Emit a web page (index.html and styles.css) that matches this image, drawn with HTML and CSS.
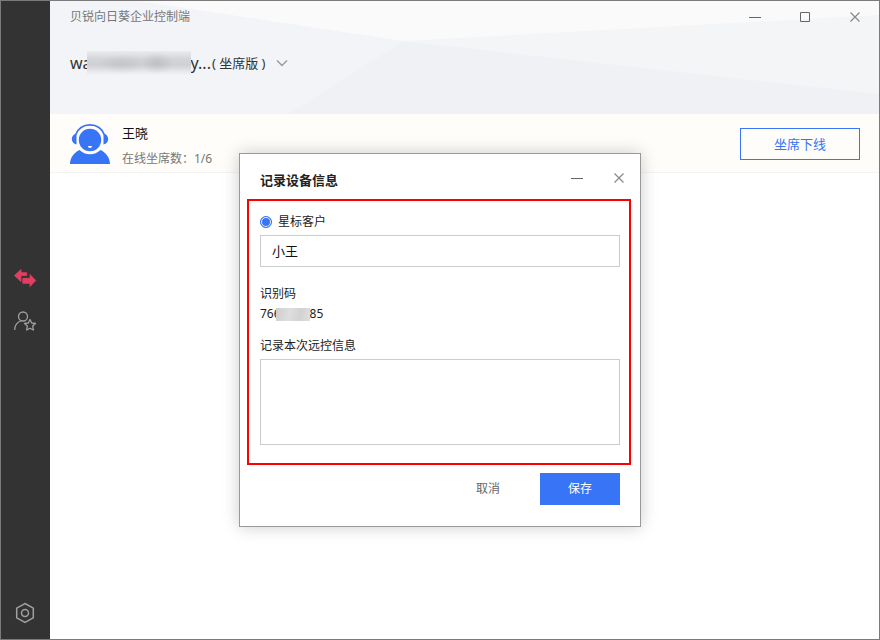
FILE: index.html
```html
<!DOCTYPE html>
<html lang="zh-CN">
<head>
<meta charset="utf-8">
<meta name="viewport" content="width=device-width, initial-scale=1">
<title>贝锐向日葵企业控制端</title>
<link rel="stylesheet" href="styles.css">
</head>
<body>
<div class="window">
  <nav class="sidebar">
    <div class="side-group">
      <a class="side-link" href="#remote" aria-label="远控">
        <svg width="24" height="20" viewBox="0 0 24 20"><path fill="#e33e60" stroke="#e33e60" stroke-width=".8" stroke-linejoin="round" d="M1.500 7.500 8 1.500v3.200h5.700v2.800H8v6zM9.800 10.300H17V6.500l5.700 6-5.700 6v-3.200H9.800z"/></svg>
      </a>
      <a class="side-link" href="#customers" aria-label="星标客户">
        <svg width="24" height="22" viewBox="0 0 24 22" fill="none" stroke="#a0a0a0" stroke-width="1.300"><circle cx="10" cy="6.500" r="4.500"/><path d="M1.700 20c0-4.500 2.500-7.700 6-9"/><path stroke-linejoin="round" d="m17 9.500 1.700 3.500 3.800.500-2.800 2.600.700 3.900-3.400-1.800-3.400 1.800.700-3.900-2.800-2.600 3.800-.500z"/></svg>
      </a>
    </div>
    <a class="side-link" href="#settings" aria-label="设置">
      <svg width="20" height="22" viewBox="0 0 20 22" fill="none" stroke="#a0a0a0" stroke-width="1.500"><path d="m10 1.500 8.300 4.700v9.600L10 20.500l-8.300-4.700V6.200z"/><circle cx="10" cy="11" r="3.500"/></svg>
    </a>
  </nav>
  <main class="content">
    <header class="header">
      <svg class="header-art" viewBox="0 0 830 113" preserveAspectRatio="none" aria-hidden="true">
        <path fill="#f0f1f5" d="M239 113 354 40 830 93v20z"/>
        <path fill="#f4f5f7" d="M354 40 830 14v79z"/>
        <path fill="#fafafa" d="M88 0 354 40 830 14V0z"/>
      </svg>
      <div class="title-bar">
        <h1 class="app-title">贝锐向日葵企业控制端</h1>
        <div class="controls">
          <button class="icon-button" type="button" aria-label="最小化"><svg width="12" height="12" viewBox="0 0 12 12"><path stroke="#666" d="M0 6.500h12"/></svg></button>
          <button class="icon-button" type="button" aria-label="最大化"><svg width="12" height="12" viewBox="0 0 12 12"><path fill="none" stroke="#666" d="M1.500 1.500h9v9h-9z"/></svg></button>
          <button class="icon-button" type="button" aria-label="关闭"><svg width="12" height="12" viewBox="0 0 12 12"><path stroke="#888" stroke-width="1.200" d="m1.500 1.500 9 9m0-9-9 9"/></svg></button>
        </div>
      </div>
      <button class="account" type="button">
        <span class="name">wa</span><span class="mask"></span><span class="name">y...</span><span class="edition">( 坐席版 )</span>
        <svg width="12" height="8" viewBox="0 0 12 8"><path fill="none" stroke="#999" stroke-width="1.400" d="m1 1.500 5 5 5-5"/></svg>
      </button>
    </header>
    <section class="agent">
      <svg class="avatar" width="40" height="40" viewBox="0 0 40 40">
        <g fill="#3874f6"><circle cx="20" cy="16" r="11.200"/><path d="M0 40c0-6 4-11.500 9.500-14a15 15 0 0 0 21 0C36 28.500 40 34 40 40z"/><path d="M6.500 9.500v11C3.500 20 1.800 17.500 1.800 15s1.700-5 4.700-5.500zM33.500 9.500v11c3-.500 4.700-3 4.700-5.500s-1.700-5-4.700-5.500z"/></g>
        <path fill="none" stroke="#3874f6" stroke-width="1.600" d="M5.500 11C8 4.500 13.500.900 20 .900S32 4.500 34.500 11"/>
        <path fill="#fff" d="M18 22h4c0 1.300-.900 2-2 2s-2-.700-2-2z"/>
      </svg>
      <div class="agent-info">
        <p class="agent-name">王晓</p>
        <p class="agent-count">在线坐席数：1/6</p>
      </div>
      <button class="offline" type="button">坐席下线</button>
    </section>
  </main>
</div>
<form class="dialog" role="dialog" aria-labelledby="dialog-title">
  <div class="dialog-head">
    <h2 id="dialog-title">记录设备信息</h2>
    <div class="controls dialog-controls">
      <button class="icon-button" type="button" aria-label="最小化"><svg width="12" height="12" viewBox="0 0 12 12"><path stroke="#666" d="M0 6.500h12"/></svg></button>
      <button class="icon-button" type="button" aria-label="关闭"><svg width="12" height="12" viewBox="0 0 12 12"><path stroke="#888" stroke-width="1.200" d="m1.500 1.500 9 9m0-9-9 9"/></svg></button>
    </div>
  </div>
  <div class="fields">
    <label class="choice"><input class="radio" type="radio" name="kind" checked>星标客户</label>
    <input class="text-box" type="text" value="小王" aria-label="客户名称">
    <div class="code">
      <p>识别码</p>
      <p class="code-value">766<span class="code-mask"></span>85</p>
    </div>
    <label class="note-label" for="note">记录本次远控信息</label>
    <textarea class="note" id="note"></textarea>
  </div>
  <div class="actions">
    <button class="cancel" type="button">取消</button>
    <button class="save" type="submit">保存</button>
  </div>
</form>
</body>
</html>
```
FILE: styles.css
```css
* {
  box-sizing: border-box;
}

body,
h1,
h2,
p {
  margin: 0;
}

body {
  display: grid;
  min-height: 100vh;
  background: #fff;
  color: #222;
  font: 12px/20px "Noto Sans", "Noto Sans CJK SC", sans-serif;
}

button,
input,
textarea {
  font: inherit;
  border-radius: 0;
}

button {
  padding: 0;
  border: 0;
  background: none;
  cursor: pointer;
}

svg {
  display: block;
  flex: none;
}

.window {
  grid-area: 1 / 1;
  display: flex;
  border: 1px solid #7b7b7b;
}

.sidebar {
  flex: none;
  width: 49px;
  display: flex;
  flex-direction: column;
  align-items: center;
  padding: 0 2px 15px 0;
  background: #333;
}

.side-group {
  flex: 1;
  display: flex;
  flex-direction: column;
  justify-content: center;
  gap: 22px;
  padding-bottom: 3px;
}

.side-link {
  display: block;
}

.content {
  flex: 1;
  min-width: 0;
}

.header {
  position: relative;
  height: 113px;
  padding: 0 10px 0 20px;
  background: #f2f4f8;
}

.header-art {
  position: absolute;
  inset: 0;
  width: 100%;
  height: 100%;
}

.title-bar,
.account {
  position: relative;
}

.title-bar {
  display: flex;
  align-items: center;
  justify-content: space-between;
  height: 32px;
}

.app-title {
  color: #777;
  font-size: 12px;
  font-weight: 400;
}

.controls {
  display: flex;
  gap: 22px;
}

.icon-button {
  display: grid;
  place-items: center;
  width: 28px;
  height: 28px;
}

.account {
  display: flex;
  align-items: center;
  height: 24px;
  margin-top: 18px;
  color: #333;
}

.name {
  font-size: 16px;
}

.mask {
  position: relative;
  width: 104px;
  height: 24px;
  margin-left: -5px;
  background:
    radial-gradient(closest-side, rgba(130, 130, 135, 0.22), transparent) 54px 1px / 32px 22px no-repeat,
    radial-gradient(closest-side, rgba(130, 130, 135, 0.15), transparent) 12px 3px / 46px 20px no-repeat,
    linear-gradient(#e9ebef, #d2d4d8 35%, #ced0d4 58%, #eef0f4 95%);
}

.edition {
  margin: 0 10px 0 1px;
  font-size: 13px;
}

.agent {
  display: flex;
  align-items: center;
  height: 59px;
  padding: 1px 19px 0 20px;
  border-bottom: 1px solid #f3f3f3;
  background: #fffdf9;
}

.agent-info {
  flex: 1;
  display: grid;
  gap: 2px;
  margin-left: 12px;
  padding-top: 4px;
}

.agent-name {
  color: #111;
  font-size: 13px;
  line-height: 24px;
}

.agent-count {
  color: #777;
  line-height: 24px;
}

.offline {
  width: 120px;
  height: 32px;
  border: 1px solid #3874f6;
  color: #3874f6;
  font-size: 13px;
}

.dialog {
  grid-area: 1 / 1;
  z-index: 1;
  place-self: center;
  width: 402px;
  max-width: 100%;
  margin-top: 40px;
  padding: 0 7px 21px;
  border: 1px solid #999;
  background: #fff;
  box-shadow: 0 0 16px rgba(0, 0, 0, 0.2);
}

.dialog-head {
  display: flex;
  align-items: center;
  justify-content: space-between;
  height: 45px;
  padding: 6px 0 0 13px;
}

.dialog-head h2 {
  font-size: 13px;
  font-weight: 700;
}

.dialog-controls {
  gap: 14px;
  padding-bottom: 4px;
}

.fields {
  margin-right: 2px;
  padding: 11px 9px 18px 11px;
  border: 2px solid #f00;
}

.choice {
  display: flex;
  align-items: center;
  gap: 6px;
}

.radio {
  appearance: none;
  width: 12px;
  height: 12px;
  margin: 0;
  border: 1px solid #3874f6;
  border-radius: 50%;
  background: #3874f6;
  box-shadow: inset 0 0 0 1px #fff;
}

.text-box,
.note {
  display: block;
  width: 100%;
  border: 1px solid #ccc;
  background: #fff;
  color: #111;
}

.text-box {
  height: 32px;
  margin-top: 3px;
  padding: 0 11px 2px;
  font-size: 13px;
}

.code {
  margin-top: 17px;
}

.code-value {
  display: flex;
  align-items: center;
}

.code-mask {
  position: relative;
  width: 34px;
  height: 13px;
  margin-left: -5px;
  background: linear-gradient(100deg, #cfcfcf, #dedede 40%, #d2d2d2 70%, #e0e0e0);
}

.note-label {
  display: block;
  margin-top: 12px;
}

.note {
  height: 86px;
  margin-top: 3px;
  padding: 8px 11px;
  resize: none;
}

.actions {
  display: flex;
  justify-content: flex-end;
  gap: 12px;
  padding: 8px 13px 0 0;
}

.cancel,
.save {
  width: 80px;
  height: 32px;
}

.cancel {
  color: #666;
}

.save {
  background: #3874f6;
  color: #fff;
}
```
